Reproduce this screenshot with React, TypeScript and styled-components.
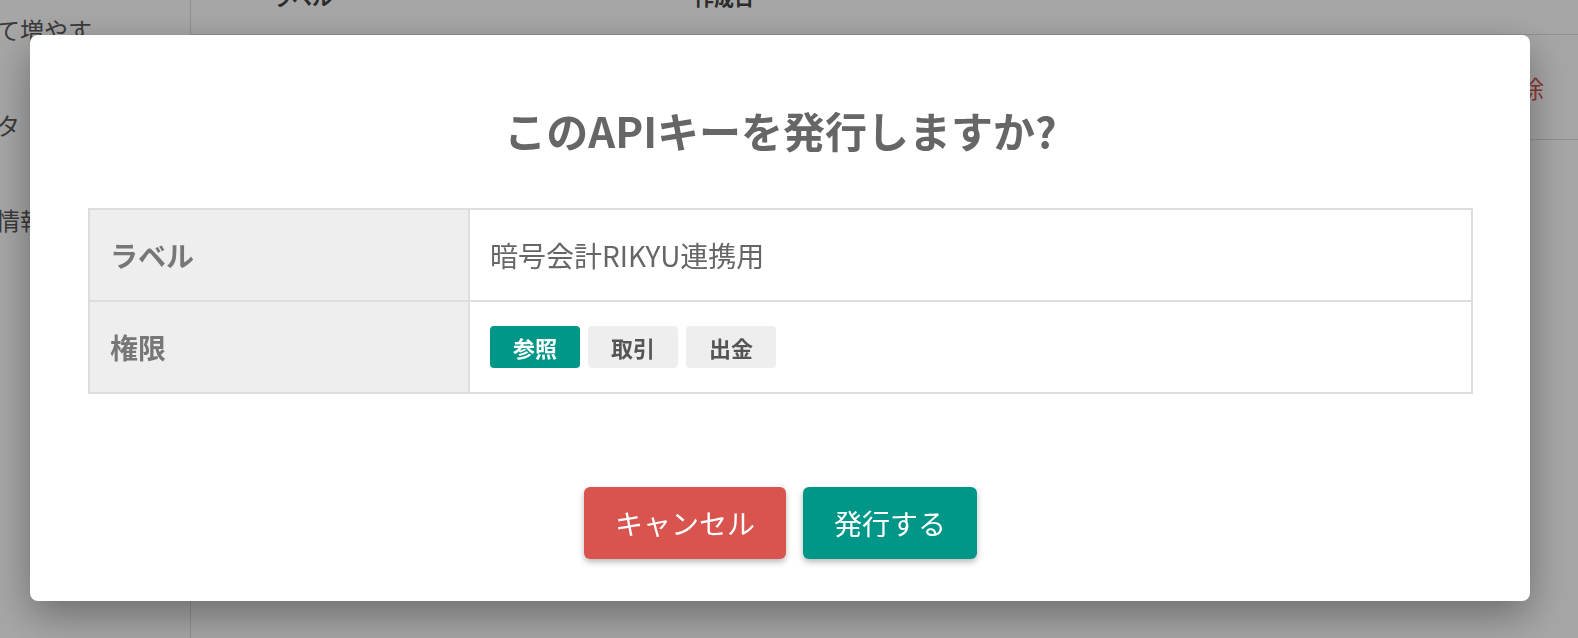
import React from "react";
import styled, { createGlobalStyle } from "styled-components";

const GlobalStyle = createGlobalStyle`
  html, body {
    margin: 0;
    padding: 0;
    background: #ffffff;
    overflow: hidden;
  }
  body {
    font-family: "Noto Sans CJK JP", "Noto Sans", sans-serif;
  }
  * { box-sizing: border-box; }
`;

/* ---------- background page (under the modal) ---------- */

const Page = styled.div`
  display: flex;
  width: 1578px;
  height: 638px;
  overflow: hidden;
  background: #ffffff;
`;

const Sidebar = styled.nav`
  width: 191px;
  flex: none;
  border-right: 1px solid #dddddd;
  overflow: hidden;
`;

const SideList = styled.ul`
  list-style: none;
  margin: 0 0 0 -172px;
  padding: 15px 0 0;
  display: flex;
  flex-direction: column;
  gap: 65px;
`;

const SideItem = styled.li`
  font-size: 24px;
  line-height: 30px;
  color: #5a5a5a;
  white-space: nowrap;
`;

const Main = styled.main`
  flex: 1;
  display: flex;
  flex-direction: column;
  margin-top: -40px;
`;

const ListRow = styled.div<{ $head?: boolean }>`
  display: grid;
  grid-template-columns: 422px 1fr auto;
  align-items: center;
  height: ${(p) => (p.$head ? "75px" : "105px")};
  padding: 0 34px 0 81px;
  border-bottom: 1px solid #dddddd;
  font-size: 20px;
  font-weight: ${(p) => (p.$head ? 700 : 400)};
  color: #444;
`;

const DangerLink = styled.span`
  font-size: 24px;
  color: #d9534f;
`;

/* ---------- modal ---------- */

const Overlay = styled.div`
  position: fixed;
  inset: 0;
  background: rgba(0, 0, 0, 0.35);
  display: flex;
  justify-content: center;
  align-items: flex-start;
  padding: 35px 18px 0 0;
`;

const Dialog = styled.section`
  width: 1500px;
  background: #ffffff;
  border-radius: 8px;
  padding: 70px 57px 42px 58px;
  box-shadow: 0 14px 40px rgba(0, 0, 0, 0.35);
`;

const Title = styled.h2`
  margin: 0;
  text-align: center;
  font-size: 42px;
  line-height: 50px;
  font-weight: 700;
  color: #666666;
`;

const InfoTable = styled.div`
  margin-top: 53px;
  display: grid;
  grid-template-columns: 378px 1fr;
  grid-auto-rows: 90px;
  gap: 2px;
  background: #dddddd;
  border: 2px solid #dddddd;
`;

const HeadCell = styled.div`
  background: #eeeeee;
  padding: 0 20px;
  display: flex;
  align-items: center;
  font-size: 28px;
  font-weight: 700;
  color: #777777;
`;

const ValueCell = styled.div`
  background: #ffffff;
  padding: 0 20px;
  display: flex;
  align-items: center;
  gap: 8px;
  font-size: 28px;
  color: #666666;
`;

const Tag = styled.span<{ $active?: boolean }>`
  height: 42px;
  padding: 0 23px;
  display: inline-flex;
  align-items: center;
  border-radius: 4px;
  font-size: 22px;
  font-weight: 700;
  background: ${(p) => (p.$active ? "#009688" : "#eeeeee")};
  color: ${(p) => (p.$active ? "#ffffff" : "#555555")};
`;

const Actions = styled.div`
  margin-top: 93px;
  display: flex;
  justify-content: center;
  gap: 17px;
`;

const Button = styled.button<{ $variant: "cancel" | "primary" }>`
  height: 72px;
  padding: 0 31px;
  border: none;
  border-radius: 6px;
  font-family: "Noto Sans CJK JP", "Noto Sans", sans-serif;
  font-size: 28px;
  font-weight: 400;
  color: #ffffff;
  background: ${(p) => (p.$variant === "cancel" ? "#d9534f" : "#009688")};
  box-shadow: 0 3px 6px rgba(0, 0, 0, 0.28);
  cursor: pointer;
`;

export default function App() {
  const perms = [
    { label: "参照", active: true },
    { label: "取引", active: false },
    { label: "出金", active: false },
  ];
  return (
    <>
      <GlobalStyle />
      <Page>
        <Sidebar>
          <SideList>
            <SideItem>暗号資産を預けて増やす</SideItem>
            <SideItem>マーケットデータ</SideItem>
            <SideItem>登録アカウント情報</SideItem>
          </SideList>
        </Sidebar>
        <Main>
          <ListRow $head>
            <span>ラベル</span>
            <span>作成日</span>
            <span />
          </ListRow>
          <ListRow>
            <span>テスト用</span>
            <span>2023/04/01</span>
            <DangerLink>削除</DangerLink>
          </ListRow>
        </Main>
      </Page>
      <Overlay>
        <Dialog role="dialog" aria-modal="true">
          <Title>このAPIキーを発行しますか?</Title>
          <InfoTable>
            <HeadCell>ラベル</HeadCell>
            <ValueCell>暗号会計RIKYU連携用</ValueCell>
            <HeadCell>権限</HeadCell>
            <ValueCell>
              {perms.map((p) => (
                <Tag key={p.label} $active={p.active}>
                  {p.label}
                </Tag>
              ))}
            </ValueCell>
          </InfoTable>
          <Actions>
            <Button $variant="cancel">キャンセル</Button>
            <Button $variant="primary">発行する</Button>
          </Actions>
        </Dialog>
      </Overlay>
    </>
  );
}
